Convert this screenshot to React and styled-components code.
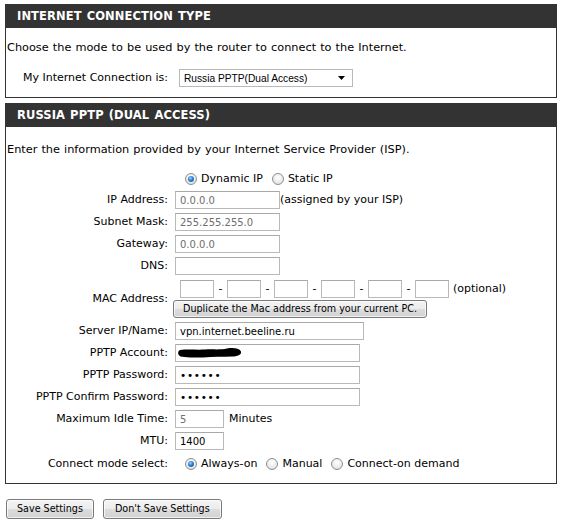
import React from "react";
import styled, { createGlobalStyle } from "styled-components";

const FONT = `"DejaVu Sans", Verdana, sans-serif`;

const GlobalStyle = createGlobalStyle`
  html, body { margin: 0; padding: 0; background: #ffffff; }
  body { font-family: ${FONT}; font-size: 11px; color: #000; }
  * { box-sizing: border-box; }
`;

const Page = styled.div`
  width: 557px;
  padding: 4px 0 0 5px;
`;

const Section = styled.section`
  border: 1px solid #333333;
  background: #fff;
  & + & { margin-top: 5px; }
`;

const SectionHeader = styled.h2`
  margin: 0;
  height: 23px;
  line-height: 23px;
  background: #333333;
  color: #ffffff;
  font-family: ${FONT};
  font-size: 11.5px;
  font-weight: bold;
  letter-spacing: 0.1px;
  word-spacing: 1px;
  padding-left: 11px;
`;

const Body = styled.div`
  padding: ${p => p.$pt}px 0 ${p => p.$pb}px 1px;
`;

const Intro = styled.p`
  margin: 0;
  line-height: 16px;
  font-size: 11.3px;
  word-spacing: 0.5px;
`;

const SelectRow = styled.div`
  display: flex;
  align-items: center;
  margin-top: 13px;
  padding-left: 16px;
`;

const SelectLabel = styled.span`
  width: 156px;
  line-height: 16px;
`;

const FakeSelect = styled.div`
  width: 174px;
  height: 18px;
  border: 1px solid #b9b9b9;
  display: flex;
  align-items: center;
  justify-content: space-between;
  padding: 0 7px 0 4px;
  font-family: "Liberation Sans", Arial, sans-serif;
  font-size: 10.2px;
  color: #000;
`;

const Form = styled.div`
  margin-top: 11px;
`;

const Row = styled.div`
  display: grid;
  grid-template-columns: 161px 1fr;
  column-gap: 7px;
  align-items: center;
  height: ${p => p.$h || 22}px;
  padding-top: ${p => p.$pt || 0}px;
`;

const Label = styled.span`
  text-align: right;
  line-height: 16px;
  white-space: nowrap;
`;

const Cell = styled.div`
  display: flex;
  align-items: center;
  gap: ${p => p.$gap || 0}px;
`;

const StackCell = styled.div`
  display: flex;
  flex-direction: column;
  gap: 2px;
  padding-top: 1px;
`;

const Field = styled.input`
  width: ${p => p.$w}px;
  height: 18px;
  border: 1px solid #b9b9b9;
  border-top-color: #a9a9a9;
  background: #fff;
  padding: 0 4px;
  margin: 0;
  font-family: ${FONT};
  font-size: 10px;
  color: ${p => (p.$muted ? "#6e6e6e" : "#000")};
  outline: none;
  &[type="password"] {
    font-size: 10.5px;
    letter-spacing: 0.7px;
  }
`;

const Note = styled.span`
  line-height: 16px;
  margin-left: ${p => p.$ml || 0}px;
`;

const MacLine = styled.div`
  display: flex;
  align-items: center;
  padding-left: 5px;
`;

const Dash = styled.span`
  width: 13px;
  text-align: center;
  line-height: 16px;
`;

const Button = styled.button`
  height: ${p => p.$h || 20}px;
  padding: 0 ${p => p.$px || 10}px;
  margin: 0;
  border: 1px solid #7a7a7a;
  border-radius: 3px;
  background: linear-gradient(#f4f4f4 0%, #ececec 48%, #dcdcdc 52%, #d2d2d2 100%);
  box-shadow: inset 0 0 0 1px rgba(255,255,255,0.7);
  font-family: ${FONT};
  font-size: 9.6px;
  color: #000;
  line-height: 1;
  cursor: default;
`;

const DupButton = styled(Button)`
  margin-left: -2px;
  align-self: flex-start;
`;

const RadioGroup = styled.div`
  display: flex;
  align-items: center;
  padding-left: 10px;
`;

const RadioOption = styled.label`
  display: inline-flex;
  align-items: center;
  gap: 4px;
  margin-right: ${p => p.$mr ?? 9}px;
  line-height: 16px;
`;

const RadioDot = styled.span`
  width: 12px;
  height: 12px;
  border-radius: 50%;
  border: 1px solid #8c8e90;
  background: radial-gradient(circle at 50% 35%, #ffffff 0%, #eaeaea 60%, #d2d2d2 100%);
  display: inline-flex;
  align-items: center;
  justify-content: center;
  flex: none;
  &::after {
    content: "";
    width: 6px;
    height: 6px;
    border-radius: 50%;
    display: ${p => (p.$on ? "block" : "none")};
    background: radial-gradient(circle at 40% 35%, #9fd3ff 0%, #2a7fd0 45%, #0b4f9c 100%);
  }
`;

const Redact = styled.div`
  position: relative;
  width: 185px;
  height: 18px;
`;

const RedactMark = styled.svg`
  position: absolute;
  left: 2px;
  top: 3px;
  pointer-events: none;
`;

const Actions = styled.div`
  display: flex;
  gap: 9px;
  margin-top: 15px;
  padding-left: 1px;
`;

function Radio({ on, children, mr }) {
  return (
    <RadioOption $mr={mr}>
      <RadioDot $on={on} />
      <span>{children}</span>
    </RadioOption>
  );
}

export default function App() {
  const macs = [0, 1, 2, 3, 4, 5];
  return (
    <>
      <GlobalStyle />
      <Page>
        <Section>
          <SectionHeader>INTERNET CONNECTION TYPE</SectionHeader>
          <Body $pt={12} $pb={10}>
            <Intro>Choose the mode to be used by the router to connect to the Internet.</Intro>
            <SelectRow>
              <SelectLabel>My Internet Connection is:</SelectLabel>
              <FakeSelect>
                <span>Russia PPTP(Dual Access)</span>
                <svg width="7" height="4" viewBox="0 0 7 4">
                  <path d="M0 0 H7 L3.5 4 Z" fill="#000" />
                </svg>
              </FakeSelect>
            </SelectRow>
          </Body>
        </Section>

        <Section>
          <SectionHeader>RUSSIA PPTP (DUAL ACCESS)</SectionHeader>
          <Body $pt={15} $pb={8}>
            <Intro>Enter the information provided by your Internet Service Provider (ISP).</Intro>
            <Form>
              <Row $h={20}>
                <span />
                <RadioGroup>
                  <Radio on>Dynamic IP</Radio>
                  <Radio>Static IP</Radio>
                </RadioGroup>
              </Row>
              <Row>
                <Label>IP Address:</Label>
                <Cell>
                  <Field $w={105} $muted readOnly value="0.0.0.0" />
                  <Note>(assigned by your ISP)</Note>
                </Cell>
              </Row>
              <Row>
                <Label>Subnet Mask:</Label>
                <Cell><Field $w={105} $muted readOnly value="255.255.255.0" /></Cell>
              </Row>
              <Row>
                <Label>Gateway:</Label>
                <Cell><Field $w={105} $muted readOnly value="0.0.0.0" /></Cell>
              </Row>
              <Row>
                <Label>DNS:</Label>
                <Cell><Field $w={105} readOnly value="" /></Cell>
              </Row>
              <Row $h={43}>
                <Label>MAC Address:</Label>
                <StackCell>
                  <MacLine>
                    {macs.map(i => (
                      <React.Fragment key={i}>
                        {i > 0 && <Dash>-</Dash>}
                        <Field $w={34} readOnly value="" />
                      </React.Fragment>
                    ))}
                    <Note $ml={4}>(optional)</Note>
                  </MacLine>
                  <DupButton $h={18} $px={9}>Duplicate the Mac address from your current PC.</DupButton>
                </StackCell>
              </Row>
              <Row>
                <Label>Server IP/Name:</Label>
                <Cell><Field $w={189} readOnly value="vpn.internet.beeline.ru" /></Cell>
              </Row>
              <Row>
                <Label>PPTP Account:</Label>
                <Cell>
                  <Redact>
                    <Field $w={185} readOnly value="" />
                    <RedactMark width="66" height="12" viewBox="0 0 66 12">
                      <path
                        d="M3 3 C10 2 20 3 28 2.5 C36 2 44 3 50 1.5 C56 0.5 62 1 64 4.5 C65 8 60 9.5 55 9.5 C46 10 36 9.5 26 10.5 C17 10.5 8 10.5 3.5 9.5 C0.5 8 0.5 4 3 3 Z"
                        fill="#000"
                      />
                    </RedactMark>
                  </Redact>
                </Cell>
              </Row>
              <Row>
                <Label>PPTP Password:</Label>
                <Cell><Field $w={185} type="password" readOnly value="123456" /></Cell>
              </Row>
              <Row>
                <Label>PPTP Confirm Password:</Label>
                <Cell><Field $w={185} type="password" readOnly value="123456" /></Cell>
              </Row>
              <Row>
                <Label>Maximum Idle Time:</Label>
                <Cell $gap={5}>
                  <Field $w={49} $muted readOnly value="5" />
                  <Note>Minutes</Note>
                </Cell>
              </Row>
              <Row>
                <Label>MTU:</Label>
                <Cell><Field $w={49} readOnly value="1400" /></Cell>
              </Row>
              <Row $h={23} $pt={1}>
                <Label>Connect mode select:</Label>
                <RadioGroup>
                  <Radio on>Always-on</Radio>
                  <Radio>Manual</Radio>
                  <Radio mr={0}>Connect-on demand</Radio>
                </RadioGroup>
              </Row>
            </Form>
          </Body>
        </Section>

        <Actions>
          <Button $px={10}>Save Settings</Button>
          <Button $px={11}>Don't Save Settings</Button>
        </Actions>
      </Page>
    </>
  );
}
